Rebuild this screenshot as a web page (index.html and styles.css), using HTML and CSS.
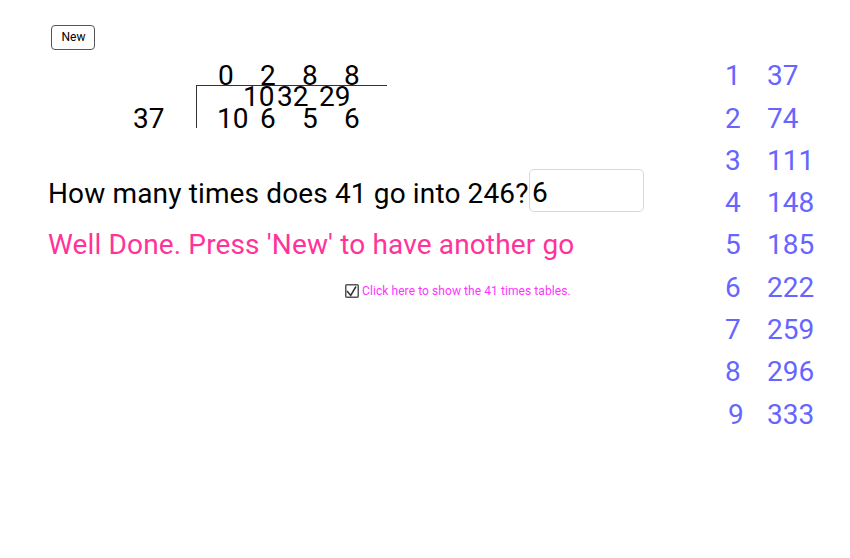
FILE: index.html
```html
<!DOCTYPE html>
<html lang="en">
<head>
    <meta charset="UTF-8">
    <title>Long division</title>
    <link rel="stylesheet" href="styles.css">
</head>
<body>
    <div class="canvas">
        <button class="new-btn">New</button>

        <!-- long division -->
        <span class="t" style="left:218px;top:60px">0</span>
        <span class="t" style="left:260px;top:60px">2</span>
        <span class="t" style="left:302px;top:60px">8</span>
        <span class="t" style="left:344px;top:60px">8</span>
        <div class="line-h"></div>
        <div class="line-v"></div>
        <span class="t" style="left:243px;top:81px">10</span>
        <span class="t" style="left:277px;top:81px">32</span>
        <span class="t" style="left:319px;top:81px">29</span>
        <span class="t" style="left:133px;top:103px">37</span>
        <span class="t" style="left:217px;top:103px">10</span>
        <span class="t" style="left:260px;top:103px">6</span>
        <span class="t" style="left:302px;top:103px">5</span>
        <span class="t" style="left:344px;top:103px">6</span>

        <span class="t wide" style="left:48px;top:178px">How many times does 41 go into 246?</span>
        <div class="answer">6</div>
        <span class="t wide done" style="left:48px;top:229px">Well Done. Press 'New' to have another go</span>

        <div class="check">
            <svg width="14" height="14" viewBox="0 0 14 14">
                <rect x="0.75" y="0.75" width="12.5" height="12.5" rx="1" fill="#fff" stroke="#555" stroke-width="1.5"/>
                <path d="M2 7 L5.7 11.5 L11 2.5" fill="none" stroke="#333" stroke-width="1.5"/>
            </svg>
            <span>Click here to show the 41 times tables.</span>
        </div>

        <!-- times table -->
        <span class="t tb" style="left:725px;top:60px">1</span><span class="t tb" style="left:767px;top:60px">37</span>
        <span class="t tb" style="left:725px;top:103px">2</span><span class="t tb" style="left:767px;top:103px">74</span>
        <span class="t tb" style="left:725px;top:145px">3</span><span class="t tb" style="left:767px;top:145px">111</span>
        <span class="t tb" style="left:725px;top:187px">4</span><span class="t tb" style="left:767px;top:187px">148</span>
        <span class="t tb" style="left:725px;top:229px">5</span><span class="t tb" style="left:767px;top:229px">185</span>
        <span class="t tb" style="left:725px;top:272px">6</span><span class="t tb" style="left:767px;top:272px">222</span>
        <span class="t tb" style="left:725px;top:314px">7</span><span class="t tb" style="left:767px;top:314px">259</span>
        <span class="t tb" style="left:725px;top:356px">8</span><span class="t tb" style="left:767px;top:356px">296</span>
        <span class="t tb" style="left:728px;top:399px">9</span><span class="t tb" style="left:767px;top:399px">333</span>
    </div>
</body>
</html>
```

FILE: styles.css
```css
* {
    box-sizing: border-box;
}

body {
    margin: 0;
    background-color: #fff;
    font-family: Roboto, sans-serif;
}

.canvas {
    position: relative;
    width: 850px;
    height: 558px;
    overflow: hidden;
}

.t {
    position: absolute;
    font-size: 28px;
    line-height: 32px;
    color: #000;
    white-space: nowrap;
}

.wide {
    letter-spacing: 0.14px;
}

.done {
    color: #ff3399;
}

.tb {
    color: #6666ff;
}

.new-btn {
    position: absolute;
    left: 51px;
    top: 25px;
    width: 44px;
    height: 25px;
    padding: 0 0 2px 1px;
    background: #fff;
    border: 1.5px solid #555;
    border-radius: 4px;
    font-family: Roboto, sans-serif;
    font-size: 12px;
    color: #000;
}

.line-h {
    position: absolute;
    left: 196px;
    top: 85px;
    width: 191px;
    height: 1px;
    background-color: #333;
}

.line-v {
    position: absolute;
    left: 196px;
    top: 85px;
    width: 1px;
    height: 43px;
    background-color: #333;
}

.answer {
    position: absolute;
    left: 529px;
    top: 169px;
    width: 115px;
    height: 43px;
    padding-left: 2px;
    border: 1.5px solid #d8d8d8;
    border-radius: 5px;
    background: #fff;
    font-size: 28px;
    line-height: 46px;
}

.check {
    position: absolute;
    left: 345px;
    top: 284px;
    display: flex;
    align-items: center;
    gap: 3px;
    font-size: 12px;
    letter-spacing: 0.08px;
    line-height: 14px;
    color: #ff33ff;
}
```
